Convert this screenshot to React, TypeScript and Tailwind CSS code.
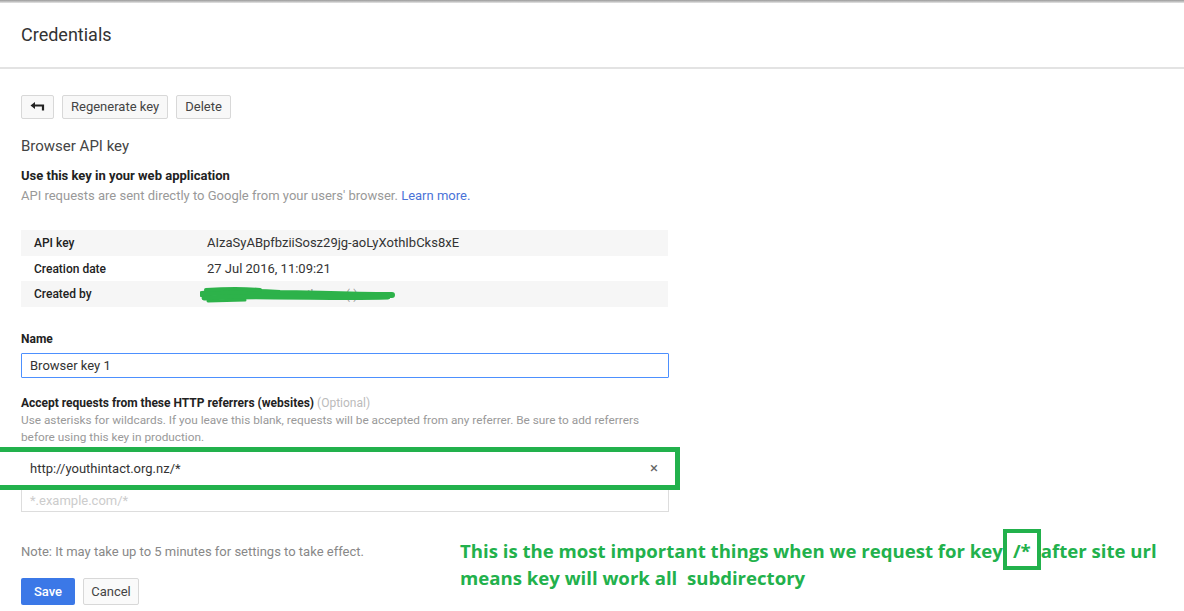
import React from "react";

export default function App() {
  return (
    <div className="relative w-[1184px] h-[611px] overflow-hidden bg-white text-[#333] font-['Roboto',_'Liberation_Sans',_sans-serif]">
      <div className="h-[3px] bg-gradient-to-b from-[#9a9a9a] to-[#e6e6e6]" />
      <div className="h-[66px] border-b-2 border-[#e3e3e3] flex items-center pl-[21px]">
        <h1 className="text-[18px] text-[#333] mt-[-2px]">Credentials</h1>
      </div>
      <div className="pl-[21px]">
        <div className="flex gap-[8px] mt-[26px]">
          <button className="h-[24px] w-[33px] border border-[#d8d8d8] rounded-[2px] bg-[#f8f8f8] flex items-center justify-center">
            <svg width="15" height="10" viewBox="0 0 15 10">
              <path d="M4 3.5H13V8.5" stroke="#222" strokeWidth="2.2" fill="none" />
              <path d="M0.5 3.5L5 0V7z" fill="#222" />
            </svg>
          </button>
          <button className="h-[24px] px-[8px] border border-[#d8d8d8] rounded-[2px] bg-[#f8f8f8] text-[13px] text-[#444]">Regenerate key</button>
          <button className="h-[24px] px-[8px] border border-[#d8d8d8] rounded-[2px] bg-[#f8f8f8] text-[13px] text-[#444]">Delete</button>
        </div>
        <div className="mt-[18px] text-[15px] text-[#444] leading-[18px]">Browser API key</div>
        <div className="mt-[13px] text-[13px] font-bold text-[#222] leading-[16px]">Use this key in your web application</div>
        <div className="mt-[4px] text-[13px] text-[#999] leading-[16px]">
          API requests are sent directly to Google from your users' browser. <span className="text-[#4a73d8]">Learn more.</span>
        </div>
        <div className="mt-[26px] w-[647px]">
          <div className="flex h-[26px] items-center bg-[#f6f6f6]">
            <div className="w-[186px] pl-[13px] text-[12px] font-medium text-[#222]">API key</div>
            <div className="text-[13px] text-[#333]">AIzaSyABpfbziiSosz29jg-aoLyXothIbCks8xE</div>
          </div>
          <div className="flex h-[25px] items-center">
            <div className="w-[186px] pl-[13px] text-[12px] font-medium text-[#222]">Creation date</div>
            <div className="text-[13px] text-[#333]">27 Jul 2016, 11:09:21</div>
          </div>
          <div className="flex h-[26px] items-center bg-[#f6f6f6]">
            <div className="w-[186px] pl-[13px] text-[12px] font-medium text-[#222]">Created by</div>
            <div className="relative h-[20px] w-[200px]">
              <span className="absolute left-[100px] top-[1px] text-[13px] text-[#999]">il.com (   )</span>
              <svg className="absolute left-[-7px] top-[1px]" width="200" height="20" viewBox="0 0 200 20">
                <path d="M2 9 C 30 6, 60 7, 80 8 C 110 8, 140 10, 192 10" stroke="#2db24a" strokeWidth="6" fill="none" strokeLinecap="round" />
                <path d="M4 13 C 30 12, 50 11, 75 12 C 110 12, 150 13, 188 12" stroke="#2db24a" strokeWidth="5" fill="none" strokeLinecap="round" />
                <path d="M6 5 C 20 4, 40 3, 60 5" stroke="#2db24a" strokeWidth="4" fill="none" strokeLinecap="round" />
                <path d="M8 16 L 45 15" stroke="#2db24a" strokeWidth="3" fill="none" strokeLinecap="round" />
              </svg>
            </div>
          </div>
        </div>
        <div className="mt-[25px] text-[12px] font-bold text-[#222] leading-[14px]">Name</div>
        <div className="mt-[7px] w-[648px] h-[25px] border border-[#4d90fe] rounded-[1px] flex items-center pl-[8px] text-[13px] text-[#333]">Browser key 1</div>
        <div className="mt-[18px] text-[12px] leading-[14px]">
          <span className="font-bold text-[#222]">Accept requests from these HTTP referrers (websites)</span>{" "}
          <span className="text-[#bbb]">(Optional)</span>
        </div>
        <div className="mt-[2px] w-[640px] text-[11.8px] text-[#999] leading-[17px]">
          Use asterisks for wildcards. If you leave this blank, requests will be accepted from any referrer. Be sure to add referrers before using this key in production.
        </div>
        <div className="relative mt-[4px] w-[648px] h-[38px] flex items-center pl-[9px] text-[13px] text-[#333]">
          http://youthintact.org.nz/*
          <span className="absolute right-[11px] top-[11px] text-[15px] text-[#666] leading-none">×</span>
        </div>
        <div className="mt-[1px] w-[648px] h-[23px] border border-[#ddd] flex items-center pl-[8px] text-[13px] text-[#ccc]">*.example.com/*</div>
        <div className="mt-[32px] text-[13px] text-[#888] leading-[16px]">Note: It may take up to 5 minutes for settings to take effect.</div>
        <div className="mt-[18px] flex gap-[8px]">
          <button className="h-[27px] w-[54px] bg-[#3b78e7] rounded-[2px] text-white text-[13px] font-medium">Save</button>
          <button className="h-[27px] w-[56px] border border-[#d8d8d8] rounded-[2px] bg-[#fafafa] text-[13px] text-[#444]">Cancel</button>
        </div>
      </div>
      {/* annotation box around referrer */}
      <div className="absolute left-[-6px] top-[447px] w-[686px] h-[43px] border-[5px] border-[#22b14c]" />
      {/* annotation text */}
      <div className="absolute left-[460px] top-[537px] text-[18.6px] font-bold text-[#22b14c] leading-[27px] font-['Open_Sans',_sans-serif] whitespace-nowrap">
        <div>
          This is the most important things when we request for key
          <span className="relative inline-block px-[10px]">
            /*
            <span className="absolute left-[0px] right-[0px] top-[-8px] bottom-[-6px] border-[4px] border-[#22b14c]" />
          </span>
          after site url
        </div>
        <div>means key will work all&nbsp; subdirectory</div>
      </div>
    </div>
  );
}
